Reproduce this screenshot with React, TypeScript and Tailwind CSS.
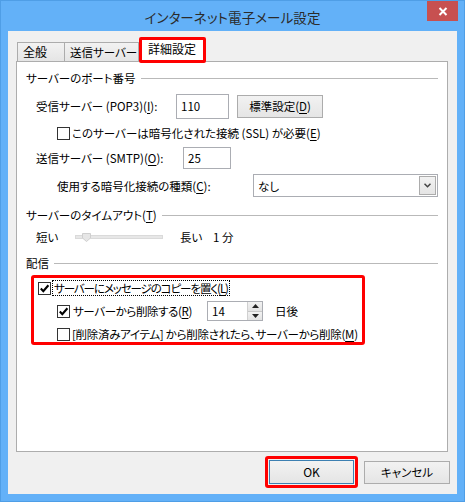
import React from "react";

const U = ({ c }: { c: string }) => (
  <span className="underline underline-offset-[2px] decoration-1">{c}</span>
);

function CheckBox({ checked }: { checked?: boolean }) {
  return (
    <span className="w-[13px] h-[13px] border border-[#333333] bg-white flex items-center justify-center shrink-0">
      {checked && (
        <svg width="11" height="11" viewBox="0 0 11 11">
          <path d="M1.8 5.6 L4.3 8.2 L9.4 2.2" stroke="#000" strokeWidth="2.1" fill="none" />
        </svg>
      )}
    </span>
  );
}

function GroupHeader({ children }: { children: React.ReactNode }) {
  return (
    <div className="flex items-center h-[16px] pl-[9px] pr-[9px]">
      <span className="whitespace-nowrap">{children}</span>
      <div className="flex-1 h-px bg-[#b9b9b9] ml-[5px]" />
    </div>
  );
}

export default function App() {
  return (
    <div className="w-[465px] h-[502px] bg-[#63b1f8] border border-[#4f9ee6] relative text-[11.5px] leading-[16px] text-black font-['Noto_Sans_CJK_JP','Noto_Sans',sans-serif] [font-feature-settings:'palt']">
      {/* title bar */}
      <div className="h-[30px] flex items-center justify-center">
        <span className="text-[13.5px] text-[#2b2b2b] tracking-[0.1px] mt-[2px]">インターネット電子メール設定</span>
      </div>
      <div className="absolute top-0 right-[6px] w-[31px] h-[20px] bg-[#c75050] flex items-center justify-center">
        <svg width="10" height="9" viewBox="0 0 10 9">
          <path d="M1.5 1 L8.5 8 M8.5 1 L1.5 8" stroke="#fff" strokeWidth="2" />
        </svg>
      </div>

      {/* client */}
      <div className="ml-[7px] w-[449px] h-[463px] bg-[#f0f0f0] px-[8px] pt-[6px]">
        {/* tabs */}
        <div className="flex items-end h-[26px] -mb-[2px] ml-[1px] relative z-10 whitespace-nowrap">
          <div className="w-[48px] h-[19px] mb-[2px] border border-b-0 border-[#acacac] bg-gradient-to-b from-[#f2f2f2] to-[#e5e5e5] flex items-center pl-[5px] text-[12px]">
            全般
          </div>
          <div className="w-[74px] h-[19px] mb-[2px] border border-b-0 border-l-0 border-[#acacac] bg-gradient-to-b from-[#f2f2f2] to-[#e5e5e5] flex items-center pl-[5px]">
            送信サーバー
          </div>
          <div className="w-[67px] h-[26px] border-[3px] border-[#ff0000] rounded-[2px] bg-white flex items-center pl-[6px] pb-[2px] text-[12px]">
            詳細設定
          </div>
        </div>

        {/* panel */}
        <div className="w-[432px] h-[391px] border border-[#adadad] bg-white">
          <div className="mt-[8px]">
            <GroupHeader>サーバーのポート番号</GroupHeader>
          </div>

          <div className="mt-[7px] h-[26px] flex items-center pl-[19px]">
            <span className="w-[140px] whitespace-nowrap">
              受信サーバー (POP3)(<U c="I" />):
            </span>
            <div className="w-[53px] h-[25px] border border-[#abadb3] bg-white flex items-center pl-[4px]">110</div>
            <div className="ml-[8px] w-[86px] h-[23px] border border-[#acacac] bg-gradient-to-b from-[#f2f2f2] to-[#e5e5e5] flex items-center justify-center">
              標準設定(<U c="D" />)
            </div>
          </div>

          <div className="mt-[6px] h-[16px] flex items-center pl-[40px]">
            <CheckBox />
            <span className="ml-[2px] whitespace-nowrap">
              このサーバーは暗号化された接続 (SSL) が必要(<U c="E" />)
            </span>
          </div>

          <div className="mt-[6px] h-[22px] flex items-center pl-[19px]">
            <span className="w-[147px] whitespace-nowrap">
              送信サーバー (SMTP)(<U c="O" />):
            </span>
            <div className="w-[48px] h-[22px] border border-[#abadb3] bg-white flex items-center pl-[4px]">25</div>
          </div>

          <div className="mt-[5px] h-[23px] flex items-center pl-[40px]">
            <span className="w-[196px] whitespace-nowrap">
              使用する暗号化接続の種類(<U c="C" />):
            </span>
            <div className="w-[185px] h-[23px] border border-[#abadb3] bg-white flex items-center pl-[4px] pr-[1px]">
              <span className="flex-1">なし</span>
              <div className="w-[17px] h-[19px] border border-[#acacac] bg-gradient-to-b from-[#f2f2f2] to-[#e5e5e5] flex items-center justify-center">
                <svg width="7" height="5" viewBox="0 0 7 5">
                  <path d="M0.5 0.8 L3.5 3.8 L6.5 0.8" stroke="#444" strokeWidth="1.5" fill="none" />
                </svg>
              </div>
            </div>
          </div>

          <div className="mt-[10px]">
            <GroupHeader>
              サーバーのタイムアウト(<U c="T" />)
            </GroupHeader>
          </div>

          <div className="mt-[6px] h-[16px] flex items-center pl-[19px]">
            <span className="w-[39px]">短い</span>
            <div className="relative w-[88px] h-[4px] bg-[#e7e7e7] border border-[#dadada]">
              <svg className="absolute left-[6px] -top-[3px]" width="9" height="9" viewBox="0 0 9 9">
                <path d="M0.5 0.5 H8.5 V5 L4.5 8.5 L0.5 5 Z" fill="#e6e6e6" stroke="#cfcfcf" />
              </svg>
            </div>
            <span className="ml-[17px] w-[33px]">長い</span>
            <span>1 分</span>
          </div>

          <div className="mt-[10px]">
            <GroupHeader>配信</GroupHeader>
          </div>

          <div className="mt-[4px] ml-[14px] w-[334px] h-[70px] border-[3px] border-[#ff0000] rounded-[3px]">
            <div className="mt-[2px] h-[16px] flex items-center pl-[4px]">
              <CheckBox checked />
              <span className="ml-[1px] h-[16px] border border-dotted border-black flex items-center px-[1px] whitespace-nowrap tracking-[-1.1px]">
                サーバーにメッセージのコピーを置く(<U c="L" />)
              </span>
            </div>
            <div className="mt-[5px] h-[20px] flex items-center pl-[23px]">
              <CheckBox checked />
              <span className="ml-[3px] w-[134px] whitespace-nowrap tracking-[-0.4px]">
                サーバーから削除する(<U c="R" />)
              </span>
              <div className="w-[56px] h-[20px] border border-[#abadb3] bg-white flex items-center pl-[4px]">
                <span className="flex-1">14</span>
                <div className="w-[15px] h-[18px] flex flex-col border-l border-[#d0d0d0]">
                  <div className="flex-1 bg-gradient-to-b from-[#f2f2f2] to-[#e3e3e3] border-b border-[#c8c8c8] flex items-center justify-center">
                    <svg width="7" height="4" viewBox="0 0 7 4"><path d="M0 4 L3.5 0 L7 4 Z" fill="#222" /></svg>
                  </div>
                  <div className="flex-1 bg-gradient-to-b from-[#f2f2f2] to-[#e3e3e3] flex items-center justify-center">
                    <svg width="7" height="4" viewBox="0 0 7 4"><path d="M0 0 L3.5 4 L7 0 Z" fill="#222" /></svg>
                  </div>
                </div>
              </div>
              <span className="ml-[12px]">日後</span>
            </div>
            <div className="mt-[5px] h-[16px] flex items-center pl-[23px]">
              <CheckBox />
              <span className="ml-[2px] whitespace-nowrap tracking-[-0.3px]">
                [削除済みアイテム] から削除されたら、サーバーから削除(<U c="M" />)
              </span>
            </div>
          </div>
        </div>

        {/* buttons */}
        <div className="mt-[4px] -mr-[1px] flex items-center justify-end">
          <div className="w-[93px] h-[32px] border-[3px] border-[#ff0000] rounded-[3px] p-[1px]">
            <div className="w-full h-full border border-[#3c7fb1] bg-gradient-to-b from-[#f2f2f2] to-[#e5e5e5] flex items-center justify-center text-[12px]">
              OK
            </div>
          </div>
          <div className="ml-[6px] w-[86px] h-[23px] border border-[#acacac] bg-gradient-to-b from-[#f2f2f2] to-[#e5e5e5] flex items-center justify-center">
            キャンセル
          </div>
        </div>
      </div>
    </div>
  );
}
